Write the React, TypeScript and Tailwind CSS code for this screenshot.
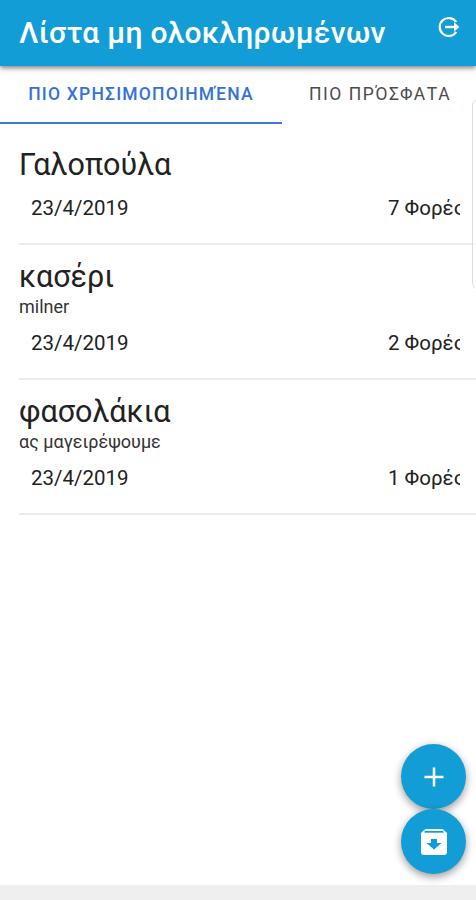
const items = [
  { name: 'Γαλοπούλα', note: '', date: '23/4/2019', times: '7 Φορές' },
  { name: 'κασέρι', note: 'milner', date: '23/4/2019', times: '2 Φορές' },
  { name: 'φασολάκια', note: 'ας μαγειρέψουμε', date: '23/4/2019', times: '1 Φορές' },
];

function ExitIcon() {
  return (
    <svg className="mb-[12px] h-[22px] w-[22px]" viewBox="0 0 22 22" fill="none" stroke="white" strokeWidth="2.2">
      <path d="M18.2 6A9 9 0 1 0 18.2 16" />
      <path d="M7 11H17" strokeWidth="2.4" />
      <path d="M16 6.2 21.5 11l-5.5 4.8Z" fill="white" stroke="none" />
    </svg>
  );
}

export default function App() {
  return (
    <div className="relative flex h-[900px] w-[476px] flex-col overflow-hidden bg-white font-['Roboto','Noto_Sans',sans-serif] text-[#222]">
      <header className="z-10 flex h-[66px] shrink-0 items-center justify-between bg-[#139dd6] pr-[16px] pl-[19px] shadow-[0_2px_5px_rgba(0,0,0,0.5)]">
        <h1 className="text-[30px] leading-[64px] font-medium tracking-[0.3px] whitespace-nowrap text-white">Λίστα μη ολοκληρωμένων</h1>
        <ExitIcon />
      </header>
      <nav className="flex h-[58px] shrink-0 text-[17.5px] whitespace-nowrap">
        <div className="flex w-[282px] justify-center border-b-2 border-[#4278d2] pt-[15px] leading-[27px] font-medium tracking-[1.2px] text-[#3472d9]">ΠΙΟ ΧΡΗΣΙΜΟΠΟΙΗΜΈΝΑ</div>
        <div className="flex w-[194px] justify-center pt-[15px] pl-[2px] leading-[27px] tracking-[1.55px] text-[#4c4c4c]">ΠΙΟ ΠΡΌΣΦΑΤΑ</div>
      </nav>
      <main className="flex flex-1 flex-col pl-[19px]">
        {items.map((item, index) => (
          <section key={item.name} className={`flex flex-col border-b-2 border-[#ebebeb] pb-[22px] ${index === 0 ? 'pt-[21px]' : 'pt-[12px]'}`}>
            <h2 className="h-[40px] text-[30.5px] leading-[40px]">{item.name}</h2>
            {item.note && <p className="mt-[2px] mb-[5px] h-[16px] text-[18px] leading-[16px] text-[#333]">{item.note}</p>}
            <div className="mt-[11px] flex h-[25px] justify-between pr-[16px] pl-[12px] text-[20.5px] leading-[25px]">
              <span>{item.date}</span>
              <span className="w-[72px] overflow-hidden whitespace-nowrap">{item.times}</span>
            </div>
          </section>
        ))}
      </main>
      <footer className="h-[15px] shrink-0 bg-[#efefef]" />
      <div className="absolute top-[98px] right-[-20px] h-[192px] w-[24px] rounded-[8px] border border-[#ddd] bg-white/60" />
      <div className="absolute top-[744px] left-[401px] flex flex-col">
        <button className="flex h-[65px] w-[65px] items-center justify-center rounded-full bg-[#139dd6] shadow-[0_3px_9px_rgba(0,0,0,0.4)]">
          <svg className="h-[20px] w-[20px]" viewBox="0 0 20 20" stroke="white" strokeWidth="2.5">
            <path d="M10 .5v19M.5 10h19" />
          </svg>
        </button>
        <button className="flex h-[65px] w-[65px] items-center justify-center rounded-full bg-[#139dd6] shadow-[0_3px_9px_rgba(0,0,0,0.4)]">
          <svg className="h-[26px] w-[26px]" viewBox="0 0 26 26">
            <path d="M4.5 0h17L26 4v19a3 3 0 0 1-3 3H3a3 3 0 0 1-3-3V4Z" fill="white" />
            <path d="M10 10h6v4h4.5L13 20.5 5.5 14H10Z" fill="#139dd6" />
            <path d="M3.5 2.8h19" stroke="#139dd6" strokeWidth="1.8" />
          </svg>
        </button>
      </div>
    </div>
  );
}
